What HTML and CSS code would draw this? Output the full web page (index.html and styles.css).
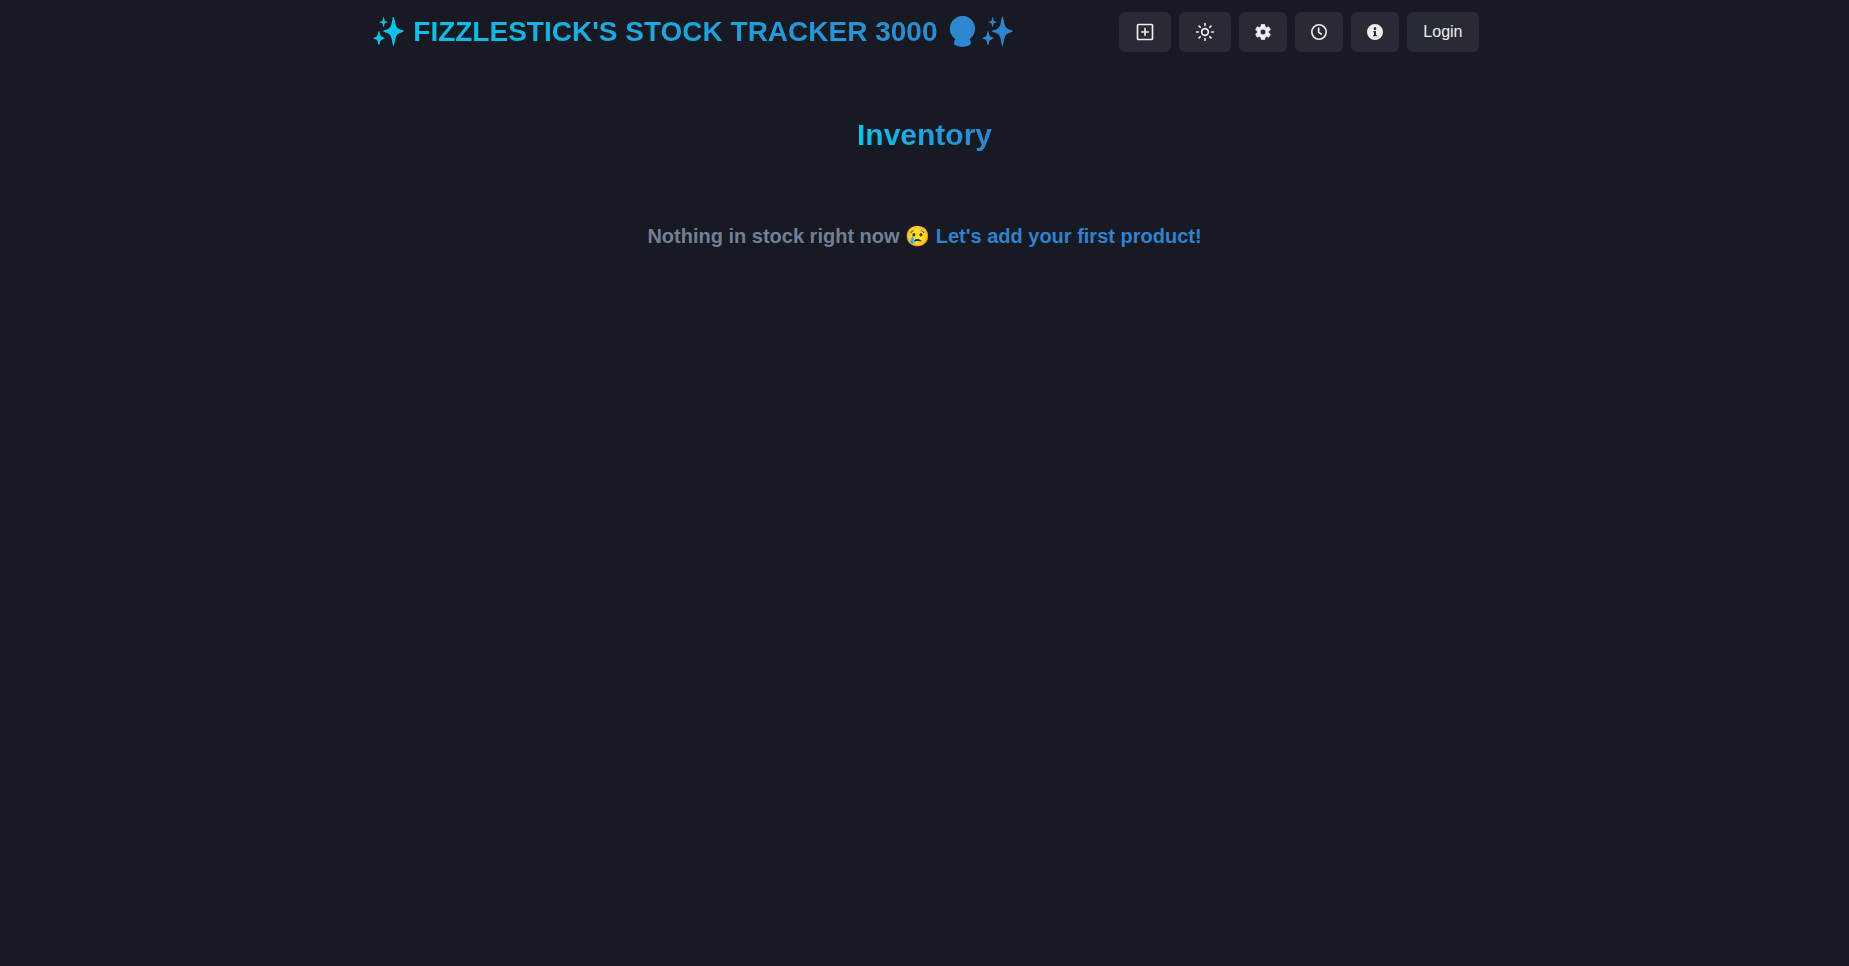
FILE: index.html
```html
<!DOCTYPE html>
<html lang="en">
<head>
  <meta charset="UTF-8" />
  <meta name="viewport" content="width=device-width, initial-scale=1.0" />
  <title>Fizzlestick's Stock Tracker 3000</title>
  <link rel="stylesheet" href="styles.css">
</head>
<body>
  <header class="navbar">
    <a class="logo gradient-text" href="#">✨ Fizzlestick's Stock Tracker 3000 🔮✨</a>

    <nav class="nav-actions">
      <a class="btn" href="#create" aria-label="Add product">
        <svg class="icon icon-lg" viewBox="0 0 24 24" fill="none" stroke="currentColor" stroke-width="2" stroke-linecap="round">
          <rect x="3" y="3" width="18" height="18" rx="1" />
          <path d="M12 8v8M8 12h8" />
        </svg>
      </a>
      <button class="btn" type="button" aria-label="Toggle colour mode">
        <svg class="icon icon-lg" viewBox="0 0 24 24" fill="none" stroke="currentColor" stroke-width="2" stroke-linecap="round">
          <circle cx="12" cy="12" r="4" />
          <path d="M12 2v2M12 20v2M4.9 4.9l1.4 1.4M17.7 17.7l1.4 1.4M2 12h2M20 12h2M6.3 17.7l-1.4 1.4M19.1 4.9l-1.4 1.4" />
        </svg>
      </button>
      <button class="btn" type="button" aria-label="Settings">
        <svg class="icon" viewBox="2 2 20 20" fill="currentColor" stroke="currentColor" stroke-width="0.6">
          <path d="M19.14 12.94c.04-.3.06-.61.06-.94 0-.32-.02-.64-.07-.94l2.03-1.58c.18-.14.23-.41.12-.61l-1.92-3.32c-.12-.22-.37-.29-.59-.22l-2.39.96c-.5-.38-1.03-.7-1.62-.94l-.36-2.54c-.04-.24-.24-.41-.48-.41h-3.84c-.24 0-.43.17-.47.41l-.36 2.54c-.59.24-1.13.57-1.62.94l-2.39-.96c-.22-.08-.47 0-.59.22L2.74 8.87c-.12.21-.08.47.12.61l2.03 1.58c-.05.3-.09.63-.09.94s.02.64.07.94l-2.03 1.58c-.18.14-.23.41-.12.61l1.92 3.32c.12.22.37.29.59.22l2.39-.96c.5.38 1.03.7 1.62.94l.36 2.54c.05.24.24.41.48.41h3.84c.24 0 .44-.17.47-.41l.36-2.54c.59-.24 1.13-.56 1.62-.94l2.39.96c.22.08.47 0 .59-.22l1.92-3.32c.12-.22.07-.47-.12-.61l-2.01-1.58zM12 15.4c-1.87 0-3.4-1.53-3.4-3.4s1.53-3.4 3.4-3.4 3.4 1.53 3.4 3.4-1.53 3.4-3.4 3.4z" />
        </svg>
      </button>
      <button class="btn" type="button" aria-label="History">
        <svg class="icon" viewBox="0 0 24 24" fill="none" stroke="currentColor" stroke-width="2.4" stroke-linecap="round" stroke-linejoin="round">
          <circle cx="12" cy="12" r="10.8" />
          <path d="M11.5 6v6.5l4 2.5" />
        </svg>
      </button>
      <button class="btn" type="button" aria-label="About">
        <svg class="icon" viewBox="0 0 24 24" fill="currentColor">
          <path fill-rule="evenodd" d="M12 0a12 12 0 1 0 0 24 12 12 0 0 0 0-24zM12 5a2 2 0 1 1 0 4 2 2 0 0 1 0-4zM9.5 10.5h4v6h1.2v2H9.3v-2h1.2v-4h-1z" />
        </svg>
      </button>
      <button class="btn" type="button">Login</button>
    </nav>
  </header>

  <main class="inventory">
    <h1 class="gradient-text">Inventory</h1>
    <div class="product-grid"></div>
    <p class="empty">Nothing in stock right now 😢 <a href="#create">Let's add your first product!</a></p>
  </main>
</body>
</html>
```
FILE: styles.css
```css
* {
  box-sizing: border-box;
  margin: 0;
  padding: 0;
}

body {
  min-height: 100vh;
  background-color: #171923;
  color: rgba(255, 255, 255, 0.92);
  font-family: "Liberation Sans", Arial, sans-serif;
  font-size: 16px;
  line-height: 1.5;
}

a {
  color: inherit;
  text-decoration: none;
}

.gradient-text {
  background: linear-gradient(to right, #0bc5ea, #3182ce);
  -webkit-background-clip: text;
  background-clip: text;
  color: transparent;
  font-weight: bold;
}

.navbar {
  display: flex;
  align-items: center;
  justify-content: space-between;
  max-width: 1140px;
  min-height: 64px;
  margin: 0 auto;
  padding: 0 16px;
}

.logo {
  font-size: 28px;
  text-transform: uppercase;
}

.nav-actions {
  display: flex;
  align-items: center;
  gap: 8px;
}

.btn {
  display: inline-flex;
  align-items: center;
  justify-content: center;
  height: 40px;
  padding: 0 16px;
  border: none;
  border-radius: 6px;
  background-color: rgba(255, 255, 255, 0.08);
  color: #eeeeee;
  font-family: inherit;
  font-size: 16px;
  cursor: pointer;
}

.btn:hover {
  background-color: rgba(255, 255, 255, 0.16);
}

.icon {
  width: 16px;
  height: 16px;
}

.icon-lg {
  width: 20px;
  height: 20px;
}

.inventory {
  display: flex;
  flex-direction: column;
  align-items: center;
  gap: 32px;
  max-width: 1140px;
  margin: 0 auto;
  padding: 48px 16px;
}

.inventory h1 {
  font-size: 30px;
}

.empty {
  color: #718096;
  font-size: 20px;
  font-weight: bold;
  text-align: center;
}

.empty a {
  color: #3182ce;
}

.empty a:hover {
  text-decoration: underline;
}

@media (max-width: 1000px) {
  .navbar {
    flex-direction: column;
  }

  .logo {
    font-size: 22px;
    text-align: center;
  }
}
```
